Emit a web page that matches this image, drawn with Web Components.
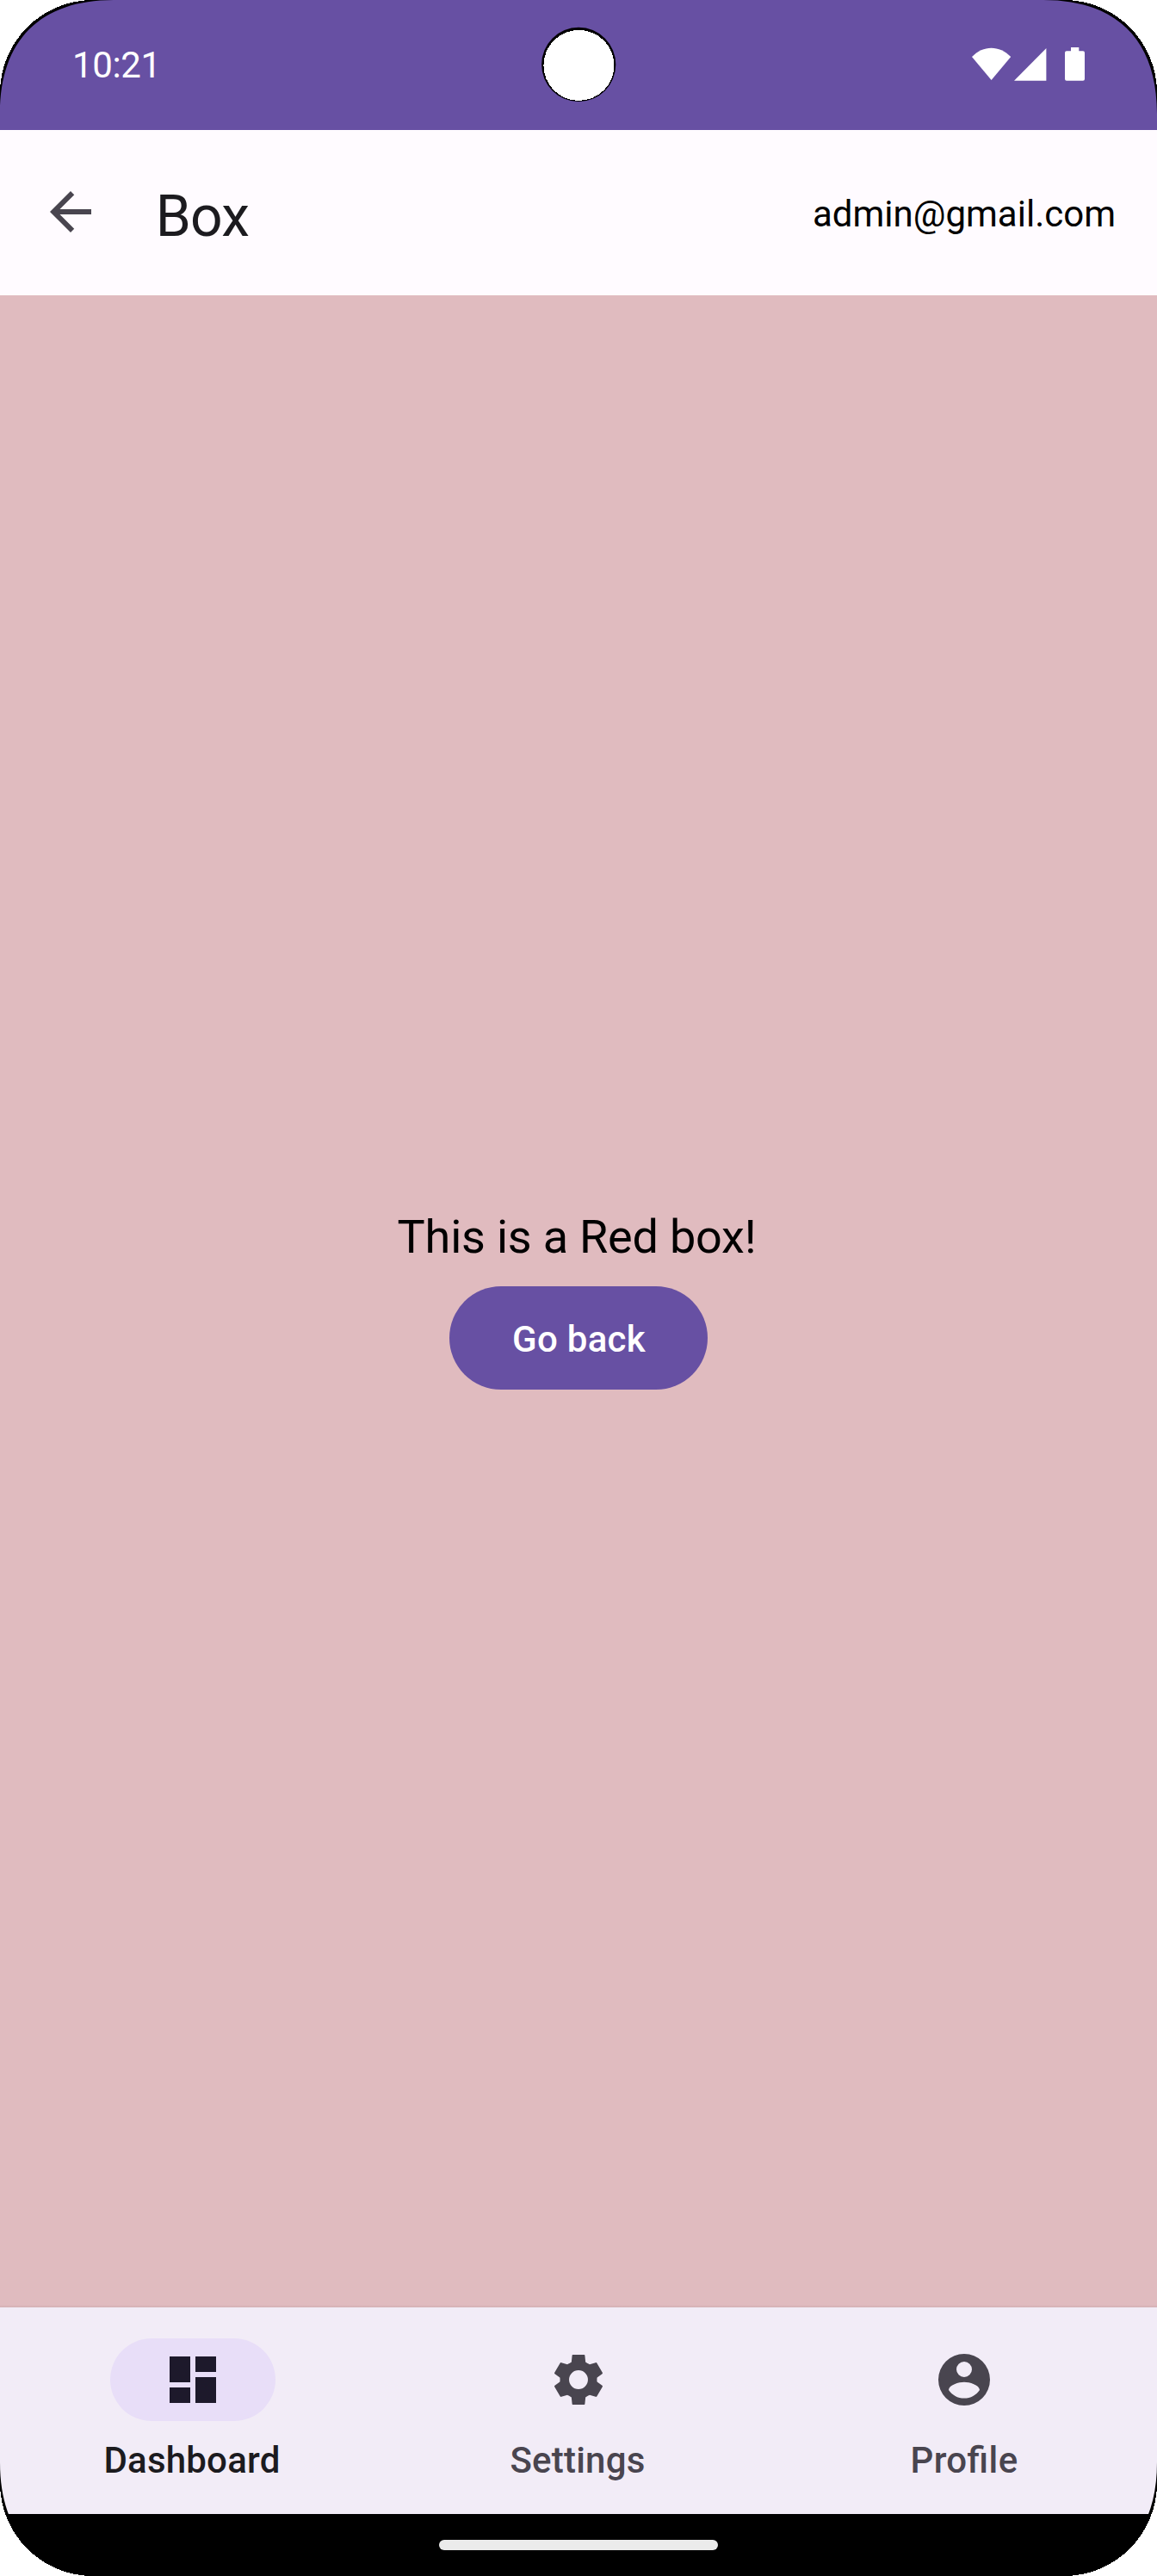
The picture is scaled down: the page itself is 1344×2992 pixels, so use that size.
<!DOCTYPE html>
<html lang="en">
<head>
<meta charset="utf-8">
<title>Box</title>
<style>
  html, body { margin: 0; background: #fff; }
  body { font-family: Roboto, "Liberation Sans", sans-serif; }
</style>
</head>
<body>
<phone-screen>
  <status-bar slot="status" time="10:21"></status-bar>
  <app-bar slot="top" heading="Box">admin@gmail.com</app-bar>
  <box-page label="This is a Red box!"><filled-button>Go back</filled-button></box-page>
  <nav-bar slot="bottom">
    <nav-item icon="dashboard" active>Dashboard</nav-item>
    <nav-item icon="settings">Settings</nav-item>
    <nav-item icon="profile" style="--tracking: .4px; --trim: 0px">Profile</nav-item>
  </nav-bar>
  <gesture-bar slot="bottom"></gesture-bar>
</phone-screen>

<script>
const define = (name, render) => customElements.define(name, class extends HTMLElement {
  connectedCallback() {
    if (this.shadowRoot) return;
    this.attachShadow({ mode: 'open' }).innerHTML = render(this);
  }
});

const ICONS = {
  dashboard: '<path d="M3 13h8V3H3v10zm0 8h8v-6H3v6zm10 0h8V11h-8v10zm0-18v6h8V3h-8z"/>',
  settings: '<path fill-rule="evenodd" d="M9.9 2.35h4.2c.2 0 .35.14.37.34l.25 2.5c.1.1 1.4.85 1.6.9l2.3-.7c.2-.07.4 0 .5.18l2.15 3.72c.1.18.06.4-.1.5l-1.95 1.36c-.1.2-.1 1.5 0 1.7l1.95 1.36c.16.1.2.32.1.5l-2.15 3.72c-.1.18-.3.25-.5.18l-2.3-.7c-.2.05-1.5.8-1.6.9l-.25 2.5c-.02.2-.17.34-.37.34H9.9c-.2 0-.35-.14-.37-.34l-.25-2.5c-.1-.1-1.4-.85-1.6-.9l-2.3.7c-.2.07-.4 0-.5-.18l-2.15-3.72c-.1-.18-.06-.4.1-.5l1.95-1.36c.1-.2.1-1.5 0-1.7L2.83 9.79c-.16-.1-.2-.32-.1-.5l2.15-3.72c.1-.18.3-.25.5-.18l2.3.7c.2-.05 1.5-.8 1.6-.9l.25-2.5c.02-.2.17-.34.37-.34zM12 8.35a3.65 3.65 0 1 0 0 7.3 3.65 3.65 0 0 0 0-7.3z"/>',
  profile: '<path fill-rule="evenodd" d="M12 2a10 10 0 1 0 0 20 10 10 0 0 0 0-20zm0 3a3 3 0 1 1 0 6 3 3 0 0 1 0-6zm0 14.2c-2.5 0-4.71-1.28-6-3.22.03-1.99 4-3.08 6-3.08s5.97 1.09 6 3.08c-1.29 1.94-3.5 3.22-6 3.22z"/>'
};

define('phone-screen', () => `
  <style>
    :host { display: flex; flex-direction: column; position: relative; width: 1344px; height: 2992px; overflow: hidden; background: #e0bbbf; }
    main { flex: 1; display: flex; min-height: 0; }
    svg { position: absolute; inset: 0; pointer-events: none; }
  </style>
  <slot name="status"></slot>
  <slot name="top"></slot>
  <main><slot></slot></main>
  <slot name="bottom"></slot>
  <svg width="1344" height="2992" viewBox="0 0 1344 2992">
    <defs>
      <g id="corner">
        <path d="M-1-1H132V0C46.7 0 0 46.7 0 132H-1Z" fill="#000"/>
        <path d="M-1-1H108V0A108 108 0 0 0 0 108H-1Z" fill="#fff" shape-rendering="crispEdges"/>
      </g>
    </defs>
    <use href="#corner"/>
    <use href="#corner" transform="translate(1344 0) scale(-1 1)"/>
    <use href="#corner" transform="translate(0 2992) scale(1 -1)"/>
    <use href="#corner" transform="translate(1344 2992) scale(-1 -1)"/>
    <circle cx="672.2" cy="74.9" r="43.1" fill="#000"/>
    <circle cx="672.4" cy="75.9" r="41" fill="#fff" shape-rendering="crispEdges"/>
  </svg>`);

define('status-bar', el => `
  <style>
    :host { display: flex; justify-content: space-between; height: 151px; background: #6750a3; color: #fff; }
    .time { font-size: 42px; line-height: 151.3px; letter-spacing: -.36px; padding-left: 84px; }
    svg { display: block; margin: 50px 80px 0 0; }
  </style>
  <span class="time">${el.getAttribute('time')}</span>
  <svg width="140" height="50" viewBox="1124 50 140 50" fill="#fff">
    <path d="M1151.6 93L1129 66C1142 52.2 1161 52.2 1174.2 66Z"/>
    <path d="M1178 93.7H1215.4V56Z"/>
    <path d="M1244 55H1253.3V59.2H1258a2 2 0 0 1 2 2V91.8a2 2 0 0 1-2 2H1239a2 2 0 0 1-2-2V61.2a2 2 0 0 1 2-2H1244Z"/>
  </svg>`);

define('app-bar', el => `
  <style>
    :host { display: flex; align-items: flex-start; height: 192px; background: #fffbff; }
    svg { margin: 59px 0 0 46px; display: block; }
    h1 { margin: 0 auto 0 62.7px; font-weight: 400; font-size: 66px; line-height: 201px; letter-spacing: -.7px; color: #1c1b1f; }
    .user { font-size: 42px; line-height: 195.3px; letter-spacing: 0; color: #000; padding-right: 48px; }
  </style>
  <svg width="72" height="72" viewBox="0 0 24 24" fill="#49454f"><path d="M20 11H7.83l5.59-5.59L12 4l-8 8 8 8 1.41-1.41L7.83 13H20v-2z"/></svg>
  <h1>${el.getAttribute('heading')}</h1>
  <span class="user"><slot></slot></span>`);

define('box-page', el => `
  <style>
    :host { flex: 1; display: flex; flex-direction: column; align-items: center; justify-content: center; background: linear-gradient(#0000 calc(100% - 3px), #0000000f) #e0bbbf; }
    p { margin: 0; height: 85px; font-size: 54px; line-height: 79px; letter-spacing: -.21px; color: #000; padding-right: 4px; }
  </style>
  <p>${el.getAttribute('label')}</p>
  <slot></slot>`);

define('filled-button', () => `
  <style>
    :host { display: block; padding: 12px 0; }
    button { display: block; box-sizing: border-box; width: 300px; height: 120px; border: 0; border-radius: 60px; background: #6750a3; color: #fff; font: 500 42px/117px Roboto, sans-serif; letter-spacing: .3px; padding: 3px 0 0 1px; }
  </style>
  <button><slot></slot></button>`);

define('nav-bar', () => `
  <style>
    :host { display: flex; height: 240px; background: #f2ecf7; }
  </style>
  <slot></slot>`);

define('nav-item', el => `
  <style>
    :host { flex: 1; display: flex; flex-direction: column; align-items: center; padding-top: 36px; color: #49454f; }
    .pill { width: 192px; height: 96px; border-radius: 48px; display: flex; align-items: center; justify-content: center; }
    :host([active]) { color: #1c1b1f; }
    :host([active]) .pill { background: #e8def8; color: #1d192b; }
    svg { display: block; fill: currentColor; }
    .label { margin-top: 16px; font-size: 42px; font-weight: 500; line-height: 60px; letter-spacing: var(--tracking, .22px); padding-right: var(--trim, 2px); font-feature-settings: "liga" 1; }
  </style>
  <div class="pill"><svg width="72" height="72" viewBox="0 0 24 24">${ICONS[el.getAttribute('icon')]}</svg></div>
  <span class="label"><slot></slot></span>`);

define('gesture-bar', () => `
  <style>
    :host { display: flex; align-items: center; justify-content: center; height: 72px; background: #000; }
    div { width: 324px; height: 12px; border-radius: 6px; background: #ebebeb; }
  </style>
  <div></div>`);
</script>
</body>
</html>
